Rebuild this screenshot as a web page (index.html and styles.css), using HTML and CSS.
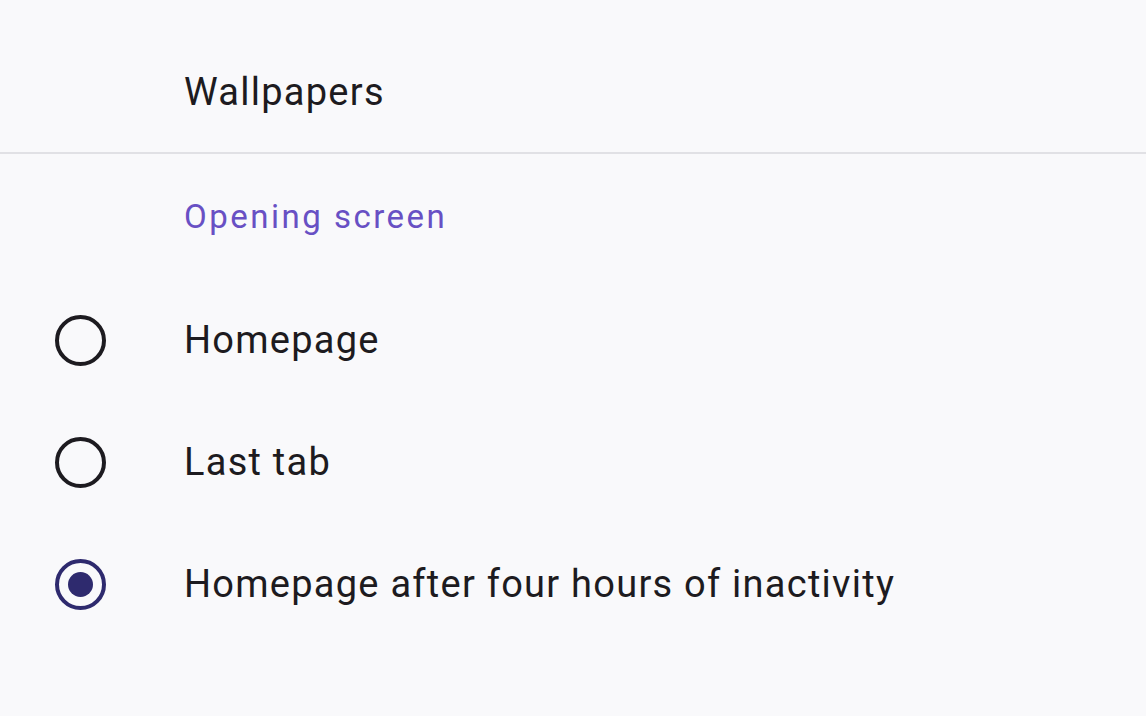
FILE: index.html
```html
<!DOCTYPE html>
<html>
<head>
<meta charset="utf-8">
<link rel="stylesheet" href="styles.css">
</head>
<body>
<div class="page">
  <div class="row-link"><span class="label">Wallpapers</span></div>
  <div class="section">
    <div class="section-title">Opening screen</div>
    <div class="radio-row"><span class="radio"></span><span class="label">Homepage</span></div>
    <div class="radio-row"><span class="radio"></span><span class="label">Last tab</span></div>
    <div class="radio-row"><span class="radio checked"></span><span class="label">Homepage after four hours of inactivity</span></div>
  </div>
</div>
</body>
</html>
```
FILE: styles.css
```css
html, body {
  margin: 0;
  padding: 0;
  background: #f9f9fb;
}
body {
  font-family: Roboto, "Noto Sans", sans-serif;
  color: #1d1b20;
  width: 1146px;
  height: 716px;
  overflow: hidden;
}
.page {
  display: flex;
  flex-direction: column;
}
.row-link {
  height: 84px;
  padding-top: 68px;
  padding-left: 184px;
  border-bottom: 2px solid #e1e1e5;
}
.label {
  font-size: 38px;
  line-height: 48px;
  letter-spacing: 1.25px;
}
.section {
  display: flex;
  flex-direction: column;
  padding-top: 43px;
}
.section-title {
  padding-left: 184px;
  font-size: 33px;
  line-height: 40px;
  color: #6850c4;
  letter-spacing: 2.5px;
  margin-bottom: 42px;
}
.radio-row {
  height: 122px;
  display: flex;
  align-items: center;
  padding-left: 55px;
}
.radio {
  width: 43px;
  height: 43px;
  border: 4px solid #1d1b20;
  border-radius: 50%;
  margin-right: 78px;
  display: flex;
  align-items: center;
  justify-content: center;
  flex: none;
}
.radio.checked {
  border-color: #2e2a6e;
}
.radio.checked::after {
  content: "";
  width: 25px;
  height: 25px;
  border-radius: 50%;
  background: #2e2a6e;
}
```
